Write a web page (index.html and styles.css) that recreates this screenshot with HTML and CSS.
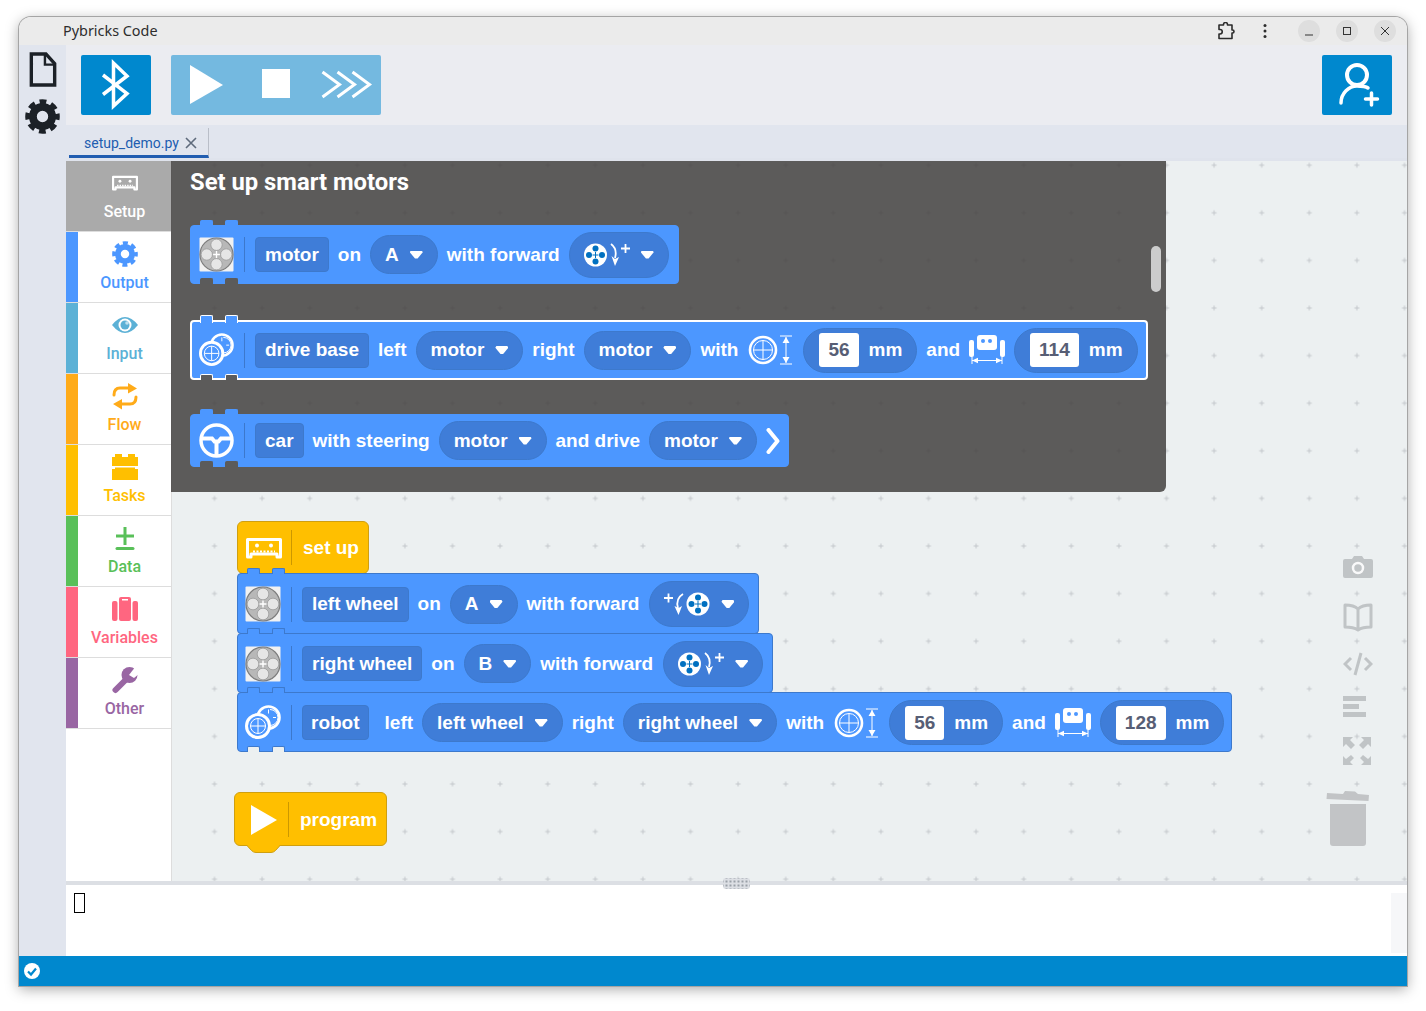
FILE: index.html
```html
<!DOCTYPE html>
<html lang="en">

<head>
    <meta charset="UTF-8">
    <title>Pybricks Code</title>
    <link rel="stylesheet" href="styles.css">
</head>

<body>
    <!-- shared block icons -->
    <svg class="defs" width="0" height="0">
        <symbol id="motor" viewBox="0 0 36 36">
            <rect x="0.5" y="0.5" width="35" height="35" rx="1" fill="#f1f1f1" />
            <circle cx="18" cy="18" r="17" fill="#b8b8b8" stroke="#7d7d7d" stroke-width="1.2" />
            <circle cx="18" cy="8" r="5.800" fill="#e6e6e6" stroke="#8c8c8c" stroke-width=".6" />
            <circle cx="18" cy="28" r="5.800" fill="#e6e6e6" stroke="#8c8c8c" stroke-width=".6" />
            <circle cx="8" cy="18" r="5.800" fill="#e6e6e6" stroke="#8c8c8c" stroke-width=".6" />
            <circle cx="28" cy="18" r="5.800" fill="#e6e6e6" stroke="#8c8c8c" stroke-width=".6" />
            <path d="M18 14.500v7M14.500 18h7" stroke="#fff" stroke-width="1.400" />
        </symbol>
        <symbol id="drive" viewBox="0 0 36 36">
            <g fill="none" stroke="#fff">
                <circle cx="23.500" cy="12.500" r="11" stroke-width="2.600" />
                <path d="M25 4.500a8 8 0 0 1 0 16M23.500 4.500v4M31 12.500h-3" stroke-width="1" />
                <circle cx="13" cy="21" r="11.500" fill="#4c97ff" stroke-width="3" />
                <circle cx="13" cy="21" r="7.500" stroke-width="1" />
                <path d="M13 13.500v15M5.500 21h15" stroke-width="1" />
            </g>
        </symbol>
        <symbol id="wheel" viewBox="0 0 30 30">
            <g fill="none" stroke="#fff">
                <circle cx="15" cy="15" r="13" stroke-width="2.600" />
                <circle cx="15" cy="15" r="9.500" stroke-width="1" />
                <path d="M15 5.500v19M5.500 15h19" stroke-width="1" />
            </g>
        </symbol>
        <symbol id="height" viewBox="0 0 12 30">
            <path d="M0 1h12M0 29h12M6 2v26" stroke="#fff" fill="none" stroke-width="1" />
            <path d="M6 2l3.500 6h-7zM6 28l3.500-6h-7z" fill="#fff" />
        </symbol>
        <symbol id="robot" viewBox="0 0 36 30">
            <rect x="0" y="5" width="5" height="17" rx="2" fill="#fff" />
            <rect x="31" y="5" width="5" height="17" rx="2" fill="#fff" />
            <rect x="8" y="0" width="20" height="15" rx="3" fill="#fff" />
            <circle cx="14" cy="6" r="2" fill="#4c97ff" />
            <circle cx="21" cy="6" r="2" fill="#4c97ff" />
            <path d="M3 22v7M33 22v7M3 25.500h30" stroke="#fff" fill="none" />
            <path d="M3 25.500l6-2.800v5.600zM33 25.500l-6-2.800v5.600z" fill="#fff" />
        </symbol>
        <symbol id="forward-cw" viewBox="0 0 46 26">
            <circle cx="11.500" cy="13" r="11.500" fill="#fff" />
            <g fill="#0070c0">
                <circle cx="11.500" cy="6.500" r="3" />
                <circle cx="11.500" cy="19.500" r="3" />
                <circle cx="5" cy="13" r="3" />
                <circle cx="18" cy="13" r="3" />
            </g>
            <path d="M11.500 10v6M8.500 13h6" stroke="#0070c0" />
            <path d="M27 2c4 3 6 7 4 14" fill="none" stroke="#fff" stroke-width="1.800" />
            <path d="M27.500 14l3.500 10 4-9-4 2z" fill="#fff" />
            <path d="M37 6.500h9M41.500 2v9" stroke="#fff" stroke-width="1.800" />
        </symbol>
        <symbol id="forward-ccw" viewBox="0 0 46 26">
            <circle cx="34" cy="13" r="11.500" fill="#fff" />
            <g fill="#0070c0">
                <circle cx="34" cy="6.500" r="3" />
                <circle cx="34" cy="19.500" r="3" />
                <circle cx="27.500" cy="13" r="3" />
                <circle cx="40.500" cy="13" r="3" />
            </g>
            <path d="M34 10v6M31 13h6" stroke="#0070c0" />
            <path d="M19 3c-5 3-7 7-5 14" fill="none" stroke="#fff" stroke-width="1.800" />
            <path d="M18 15l-3.500 9-4-9 4 2z" fill="#fff" />
            <path d="M0 7h9M4.500 2.500v9" stroke="#fff" stroke-width="1.800" />
        </symbol>
        <symbol id="setup" viewBox="0 0 36 22">
            <path d="M3 20H1.500V2.500h33V20H31v-3H5v3z" fill="none" stroke="currentColor" stroke-width="3" stroke-linejoin="round" />
            <circle cx="11" cy="8.500" r="2" fill="currentColor" />
            <circle cx="25" cy="8.500" r="2" fill="currentColor" />
            <path d="M7 14.500h22" stroke="currentColor" stroke-width="2" stroke-dasharray="2 1.500" />
        </symbol>
        <symbol id="gear" viewBox="0 0 40 40">
            <g fill="none" stroke="currentColor">
                <circle cx="20" cy="20" r="11" stroke-width="9" />
                <circle cx="20" cy="20" r="16.500" stroke-width="6.500" stroke-dasharray="7.500 5.460" stroke-dashoffset="3.750" />
            </g>
        </symbol>
    </svg>

    <div class="window">
        <header class="titlebar">
            <span class="title">Pybricks Code</span>
            <svg class="title-icon" width="18" height="18" viewBox="0 0 18 18">
                <path d="M2 3h4.500V2.500a2 2 0 0 1 4 0V3H15v5h.5a1.500 1.500 0 0 1 0 3H15v5.500H2V12h1a2 2 0 0 0 0-4.500H2z" fill="none" stroke="#2c2c2c" stroke-width="1.600" stroke-linejoin="round" />
            </svg>
            <svg class="title-dots" width="6" height="16" viewBox="0 0 6 16">
                <circle cx="3" cy="2.500" r="1.500" />
                <circle cx="3" cy="8" r="1.500" />
                <circle cx="3" cy="13.500" r="1.500" />
            </svg>
            <div class="win-controls">
                <span class="win-btn"><svg width="22" height="22" viewBox="0 0 22 22"><path d="M7 15h8" stroke="#333" /></svg></span>
                <span class="win-btn"><svg width="22" height="22" viewBox="0 0 22 22"><rect x="7.500" y="7.500" width="7" height="7" fill="none" stroke="#333" /></svg></span>
                <span class="win-btn"><svg width="22" height="22" viewBox="0 0 22 22"><path d="M7 7l8 8M15 7l-8 8" stroke="#333" /></svg></span>
            </div>
        </header>

        <div class="main">
            <nav class="activity">
                <svg class="activity-file" width="28" height="35" viewBox="0 0 28 36">
                    <path d="M2 2h15l9 10v22H2z" fill="none" stroke="#1c2127" stroke-width="3.500" />
                    <path d="M16 2v11h10" fill="none" stroke="#1c2127" stroke-width="2.500" />
                </svg>
                <svg class="activity-gear" width="35" height="35"><use href="#gear" /></svg>
            </nav>

            <div class="content">
                <div class="toolbar">
                    <button class="tool-btn">
                        <svg width="70" height="60" viewBox="0 0 70 60">
                            <path d="M22 20l24 18.500-13.500 12.500V8L46 21 22 39.500" fill="none" stroke="#fff" stroke-width="3.500" />
                        </svg>
                    </button>
                    <div class="tool-group">
                        <svg width="70" height="60" viewBox="0 0 70 60"><path d="M19 10l33 20-33 19z" fill="#fff" /></svg>
                        <svg width="70" height="60" viewBox="0 0 70 60"><rect x="21" y="14" width="28" height="29" fill="#fff" /></svg>
                        <svg width="70" height="60" viewBox="0 0 70 60">
                            <path d="M11.500 17l17 12.500-17 12.500M26.500 17l17 12.500-17 12.500M41.500 17l17 12.500-17 12.500" fill="none" stroke="#fff" stroke-width="3" />
                        </svg>
                    </div>
                    <button class="tool-btn tool-user">
                        <svg width="70" height="60" viewBox="0 0 70 60">
                            <g fill="none" stroke="#fff" stroke-linecap="round">
                                <circle cx="35" cy="20" r="10" stroke-width="4" />
                                <path d="M19 48c0-10 8-17 16-17 5 0 9 .5 11 2" stroke-width="3.500" />
                                <path d="M43.500 44h12M49.500 38v12" stroke-width="3.500" />
                            </g>
                        </svg>
                    </button>
                </div>

                <div class="tabs-bar">
                    <div class="tab">
                        <span>setup_demo.py</span>
                        <svg width="12" height="12" viewBox="0 0 12 12"><path d="M1 1l10 10M11 1L1 11" stroke="#5f6b7c" stroke-width="1.600" /></svg>
                    </div>
                </div>

                <div class="editor">
                    <aside class="toolbox">
                        <div class="cat cat-setup">
                            <svg width="26" height="16"><use href="#setup" /></svg>
                            <span>Setup</span>
                        </div>
                        <div class="cat cat-output">
                            <svg width="28" height="28"><use href="#gear" /></svg>
                            <span>Output</span>
                        </div>
                        <div class="cat cat-input">
                            <svg width="26" height="28" viewBox="0 0 26 28">
                                <path d="M0 14Q13-2 26 14 13 30 0 14z" fill="currentColor" />
                                <circle cx="13" cy="14" r="6.500" fill="#fff" />
                                <circle cx="13" cy="14" r="4.500" fill="currentColor" />
                                <circle cx="15" cy="12" r="1.800" fill="#fff" opacity=".6" />
                            </svg>
                            <span>Input</span>
                        </div>
                        <div class="cat cat-flow">
                            <svg width="26" height="28" viewBox="0 0 26 28">
                                <path d="M2 13c0-5 2-7 6-7h10M24 15c0 5-2 7-6 7H8" fill="none" stroke="currentColor" stroke-width="3" stroke-linecap="round" />
                                <path d="M16 1l9 5.500-9 5zM10 17l-9 5 9 5.500z" fill="currentColor" />
                            </svg>
                            <span>Flow</span>
                        </div>
                        <div class="cat cat-tasks">
                            <svg width="26" height="28" viewBox="0 0 26 28">
                                <path d="M0 4h3V1h7v3h6V1h7v3h3v9H0zM0 16h3v-1.500h20V16h3v11H0z" fill="currentColor" />
                            </svg>
                            <span>Tasks</span>
                        </div>
                        <div class="cat cat-data">
                            <svg width="20" height="28" viewBox="0 0 20 28">
                                <path d="M1 12h18M10 3v18" fill="none" stroke="currentColor" stroke-width="3" />
                                <path d="M2 24.500h16" stroke="currentColor" stroke-width="3" stroke-linecap="round" />
                            </svg>
                            <span>Data</span>
                        </div>
                        <div class="cat cat-variables">
                            <svg width="26" height="28" viewBox="0 0 26 28">
                                <rect x="0" y="6" width="5.500" height="20" rx="2" fill="currentColor" />
                                <rect x="7" y="2" width="12" height="24" rx="2" fill="currentColor" />
                                <rect x="20.500" y="6" width="5.500" height="20" rx="2" fill="currentColor" />
                                <rect x="10" y="4" width="6" height="1.500" fill="#fff" />
                            </svg>
                            <span>Variables</span>
                        </div>
                        <div class="cat cat-other">
                            <svg width="26" height="28" viewBox="0 0 26 28">
                                <path d="M3.500 24L14 13.500" stroke="currentColor" stroke-width="6" stroke-linecap="round" />
                                <circle cx="17.500" cy="9" r="8" fill="currentColor" />
                                <path d="M17 9l7-9h4v7l-6 5z" fill="#fff" />
                            </svg>
                            <span>Other</span>
                        </div>
                    </aside>

                    <section class="canvas">
                        <svg class="canvas-grid" width="100%" height="100%">
                            <defs>
                                <pattern id="dots" x="18.700" y="-19.600" width="47.600" height="47.600" patternUnits="userSpaceOnUse">
                                    <path d="M21.300 23.800h5M23.800 21.300v5" stroke="#c4c8cb" />
                                </pattern>
                            </defs>
                            <rect width="100%" height="100%" fill="url(#dots)" />
                        </svg>

                        <!-- flyout with the blocks of the Setup category -->
                        <div class="flyout">
                            <h2 class="flyout-title">Set up smart motors</h2>
                            <div class="flyout-list">
                                <div class="block block-flyout">
                                    <span class="tabs"><i></i><i></i></span>
                                    <svg class="b-icon" width="35" height="35"><use href="#motor" /></svg>
                                    <span class="divider"></span>
                                    <span class="chip">motor</span>
                                    <span>on</span>
                                    <span class="pill">A <i class="caret"></i></span>
                                    <span>with forward</span>
                                    <span class="pill pill-tall"><svg width="46" height="26"><use href="#forward-cw" /></svg><i class="caret"></i></span>
                                    <span class="notches"><i></i><i></i></span>
                                </div>
                                <div class="block block-flyout block-selected">
                                    <span class="tabs"><i></i><i></i></span>
                                    <svg class="b-icon" width="35" height="35"><use href="#drive" /></svg>
                                    <span class="divider"></span>
                                    <span class="chip">drive base</span>
                                    <span>left</span>
                                    <span class="pill">motor <i class="caret"></i></span>
                                    <span>right</span>
                                    <span class="pill">motor <i class="caret"></i></span>
                                    <span>with</span>
                                    <svg class="b-wheel" width="30" height="30"><use href="#wheel" /></svg>
                                    <svg class="b-height" width="12" height="30"><use href="#height" /></svg>
                                    <span class="pill pill-num"><b class="num">56</b> mm</span>
                                    <span>and</span>
                                    <svg width="36" height="30"><use href="#robot" /></svg>
                                    <span class="pill pill-num"><b class="num">114</b> mm</span>
                                    <span class="notches"><i></i><i></i></span>
                                </div>
                                <div class="block block-flyout block-short">
                                    <span class="tabs"><i></i><i></i></span>
                                    <svg class="b-icon" width="35" height="35" viewBox="0 0 35 35">
                                        <g fill="none" stroke="#fff">
                                            <circle cx="17.500" cy="17.500" r="15.500" stroke-width="3.500" />
                                            <path d="M3 15.500h10l2.500 3h4l2.500-3h10M17.500 19v14" stroke-width="4" />
                                        </g>
                                    </svg>
                                    <span class="divider"></span>
                                    <span class="chip">car</span>
                                    <span>with steering</span>
                                    <span class="pill">motor <i class="caret"></i></span>
                                    <span>and drive</span>
                                    <span class="pill">motor <i class="caret"></i></span>
                                    <svg width="14" height="26" viewBox="0 0 14 26"><path d="M2.500 2l9 11-9 11" fill="none" stroke="#fff" stroke-width="4" stroke-linecap="round" stroke-linejoin="round" /></svg>
                                    <span class="notches"><i></i><i></i></span>
                                </div>
                            </div>
                            <span class="flyout-scroll"></span>
                        </div>

                        <!-- setup stack -->
                        <div class="stack">
                            <div class="block block-hat">
                                <svg class="hat-icon" width="36" height="22"><use href="#setup" /></svg>
                                <span class="divider"></span>
                                <span>set up</span>
                                <span class="notches"><i></i><i></i></span>
                            </div>
                            <div class="block">
                                <span class="tabs"><i></i><i></i></span>
                                <svg class="b-icon" width="36" height="36"><use href="#motor" /></svg>
                                <span class="divider"></span>
                                <span class="chip">left wheel</span>
                                <span>on</span>
                                <span class="pill">A <i class="caret"></i></span>
                                <span>with forward</span>
                                <span class="pill pill-tall"><svg width="46" height="26"><use href="#forward-ccw" /></svg><i class="caret"></i></span>
                                <span class="notches"><i></i><i></i></span>
                            </div>
                            <div class="block">
                                <span class="tabs"><i></i><i></i></span>
                                <svg class="b-icon" width="36" height="36"><use href="#motor" /></svg>
                                <span class="divider"></span>
                                <span class="chip">right wheel</span>
                                <span>on</span>
                                <span class="pill">B <i class="caret"></i></span>
                                <span>with forward</span>
                                <span class="pill pill-tall"><svg width="46" height="26"><use href="#forward-cw" /></svg><i class="caret"></i></span>
                                <span class="notches"><i></i><i></i></span>
                            </div>
                            <div class="block block-robot">
                                <span class="tabs"><i></i><i></i></span>
                                <svg class="b-icon" width="36" height="36"><use href="#drive" /></svg>
                                <span class="divider"></span>
                                <span class="chip chip-robot">robot</span>
                                <span>left</span>
                                <span class="pill">left wheel <i class="caret"></i></span>
                                <span>right</span>
                                <span class="pill">right wheel <i class="caret"></i></span>
                                <span>with</span>
                                <svg class="b-wheel" width="30" height="30"><use href="#wheel" /></svg>
                                <svg class="b-height" width="12" height="30"><use href="#height" /></svg>
                                <span class="pill pill-num"><b class="num">56</b> mm</span>
                                <span>and</span>
                                <svg width="36" height="30"><use href="#robot" /></svg>
                                <span class="pill pill-num"><b class="num">128</b> mm</span>
                                <span class="notches"><i></i><i></i></span>
                            </div>
                        </div>

                        <div class="block block-hat block-program">
                            <svg width="26" height="30" viewBox="0 0 26 30"><path d="M0 0l26 15L0 30z" fill="#fff" /></svg>
                            <span class="divider"></span>
                            <span>program</span>
                            <svg class="prog-notch" width="35" height="8" viewBox="0 0 35 8"><path d="M.5 0l5 5.500Q7.500 7.500 10 7.500h15q2.500 0 4.500-2l5-5.500" fill="#ffbf00" stroke="#cf9f10" /></svg>
                        </div>

                        <!-- workspace buttons -->
                        <div class="ws-tools">
                            <svg class="ws-camera" width="30" height="22" viewBox="0 0 30 22">
                                <path d="M2 3h7l2-3h8l2 3h7a2 2 0 0 1 2 2v15a2 2 0 0 1-2 2H2a2 2 0 0 1-2-2V5a2 2 0 0 1 2-2z" fill="currentColor" />
                                <circle cx="15" cy="12" r="5" fill="none" stroke="#fff" stroke-width="2.500" opacity=".9" />
                            </svg>
                            <svg width="30" height="29" viewBox="0 0 30 29">
                                <path d="M15 6C12 3 7 2 2 2v22c5 0 10 1 13 3 3-2 8-3 13-3V2c-5 0-10 1-13 4zV27" fill="none" stroke="currentColor" stroke-width="3" stroke-linejoin="round" />
                            </svg>
                            <svg width="30" height="24" viewBox="0 0 30 24">
                                <path d="M8 6L2 12l6 6M22 6l6 6-6 6" fill="none" stroke="currentColor" stroke-width="3" />
                                <path d="M18 1l-6 22" stroke="currentColor" stroke-width="3" />
                            </svg>
                            <svg width="30" height="21" viewBox="0 0 30 21">
                                <path d="M0 0h23v5H0zM0 8h16v5H0zM0 16h23v5H0z" fill="currentColor" />
                            </svg>
                            <svg width="28" height="28" viewBox="0 0 28 28">
                                <g fill="currentColor">
                                    <path d="M0 0h10L7 3l5 5-4 4-5-5-3 3z" />
                                    <path d="M28 0H18l3 3-5 5 4 4 5-5 3 3z" />
                                    <path d="M0 28h10l-3-3 4-4-3-3-5 4-3-3z" />
                                    <path d="M28 28H18l3-3-4-4 3-3 5 4 3-3z" />
                                </g>
                            </svg>
                        </div>
                        <svg class="ws-trash" width="44" height="57" viewBox="0 0 44 57">
                            <path d="M1 3l16 1 2-3 10 .5 3 2.500 11 1-.5 6L.5 9z" fill="currentColor" />
                            <path d="M4 14h36v39a3 3 0 0 1-3 3H7a3 3 0 0 1-3-3z" fill="currentColor" />
                        </svg>
                    </section>
                </div>

                <div class="sash"><span class="sash-grip"></span></div>

                <div class="terminal">
                    <span class="cursor"></span>
                    <span class="term-scroll"></span>
                </div>
            </div>
        </div>

        <footer class="statusbar">
            <svg width="18" height="18" viewBox="0 0 18 18">
                <circle cx="9" cy="9" r="8" fill="#fff" />
                <path d="M5 9.500l3 3 5-6" fill="none" stroke="#0088ce" stroke-width="2.200" />
            </svg>
        </footer>
    </div>
</body>

</html>
```

FILE: styles.css
```css
* {
    margin: 0;
    padding: 0;
    box-sizing: border-box;
}

body {
    width: 1426px;
    height: 1011px;
    padding: 17px 19px 25px;
    overflow: hidden;
    background-color: #fff;
    font-family: "Liberation Sans", Arial, sans-serif;
}

.defs {
    position: absolute;
}

svg {
    display: block;
    flex: none;
}

/* window frame */
.window {
    display: flex;
    width: 1388px;
    height: 969px;
    flex-direction: column;
    overflow: hidden;
    border-radius: 12px 12px 0 0;
    box-shadow: 0 0 0 1px #a5a5a5, 0 3px 14px rgba(0, 0, 0, .35);
}

.titlebar {
    display: flex;
    height: 28px;
    flex: none;
    align-items: center;
    background-color: #ebebeb;
}

.title {
    margin-left: 44px;
    padding-bottom: 2px;
    color: #2d2d2d;
    font-family: "Noto Sans", sans-serif;
    font-size: 14.4px;
}

.title-icon {
    margin-left: auto;
}

.title-dots {
    margin-left: 27px;
    fill: #2d2d2d;
}

.win-controls {
    display: flex;
    margin: 0 11px 0 30px;
    gap: 16px;
}

.win-btn {
    width: 22px;
    height: 22px;
    border-radius: 50%;
    background-color: #dedede;
}

.main {
    display: flex;
    flex: 1;
    min-height: 0;
}

.activity {
    display: flex;
    width: 47px;
    flex: none;
    align-items: center;
    flex-direction: column;
    padding-top: 7px;
    background-color: #e1e5ee;
}

.activity-gear {
    margin-top: 12px;
    color: #1c2127;
}

.content {
    display: flex;
    min-width: 0;
    flex: 1;
    flex-direction: column;
}

/* toolbar */
.toolbar {
    display: flex;
    height: 80px;
    flex: none;
    gap: 20px;
    padding: 10px 15px;
    background-color: #ebecf1;
}

.tool-btn {
    width: 70px;
    height: 60px;
    border: none;
    border-radius: 2px;
    background-color: #0088ce;
}

.tool-group {
    display: flex;
    height: 60px;
    border-radius: 2px;
    background-color: #74b9e0;
}

.tool-user {
    margin-left: auto;
}

.tabs-bar {
    display: flex;
    height: 36px;
    flex: none;
    padding: 3px 0 0 3px;
    background-color: #e1e5ee;
    border-bottom: 3px solid #dfe3ec;
}

.tab {
    display: flex;
    width: 140px;
    height: 30px;
    gap: 6px;
    align-items: center;
    padding: 2px 0 0 15px;
    color: #215db0;
    font-family: Roboto, sans-serif;
    font-size: 14px;
    border-right: 1px solid #b9bec8;
    border-bottom: 3px solid #215db0;
}

/* editor */
.editor {
    display: flex;
    height: 720px;
    flex: none;
}

.toolbox {
    display: flex;
    width: 106px;
    flex: none;
    flex-direction: column;
    background-color: #fff;
    border-right: 1px solid #ddd;
    font-family: Roboto, sans-serif;
    font-size: 16px;
    font-weight: 500;
}

.cat {
    display: flex;
    height: 71px;
    flex: none;
    gap: 5px;
    align-items: center;
    flex-direction: column;
    justify-content: center;
    padding: 0 0 2px 12px;
    color: var(--cat);
    border-bottom: 1px solid #ddd;
    box-shadow: inset 12px 0 0 var(--cat);
}

.cat svg {
    height: 28px;
}

.cat-setup {
    color: #fff;
    background-color: #aaa;
}

.cat-output svg {
    width: 26px;
    height: 26px;
    margin: 1px 0;
}

.cat-output { --cat: #4c97ff; }
.cat-input { --cat: #5cb1d6; }
.cat-flow { --cat: #ffab19; }
.cat-tasks { --cat: #ffbf00; }
.cat-data { --cat: #59c059; }
.cat-variables { --cat: #ff6680; }
.cat-other { --cat: #9966a3; }

.canvas {
    position: relative;
    flex: 1;
    background-color: #ecf0f1;
    --notch: #ecf0f1;
}

.canvas-grid {
    position: absolute;
    left: 0;
    top: 0;
}

/* flyout */
.flyout {
    position: absolute;
    left: -1px;
    top: 0;
    width: 995px;
    height: 331px;
    padding: 7px 0 0 19px;
    color: #fff;
    background-color: rgba(67, 65, 64, .85);
    border-radius: 0 0 6px 0;
    --notch: #5b5b5b;
}

.flyout-title {
    font-family: Roboto, sans-serif;
    font-size: 23.8px;
    font-weight: 700;
    line-height: 28px;
}

.flyout-list {
    display: flex;
    margin-top: 29px;
    gap: 36px;
    align-items: flex-start;
    flex-direction: column;
}

.flyout-scroll {
    position: absolute;
    right: 5px;
    top: 85px;
    width: 10px;
    height: 46px;
    border-radius: 5px;
    background-color: #ccc;
}

/* blocks */
.block {
    position: relative;
    display: inline-flex;
    height: 60px;
    gap: 9px;
    align-items: center;
    padding: 0 9px 0 8px;
    color: #fff;
    font-size: 19px;
    font-weight: bold;
    white-space: nowrap;
    border: 1px solid #3d79cc;
    border-radius: 4px;
    background-color: #4c97ff;
}

.block-flyout {
    height: 59px;
    border-color: #4c97ff;
}

.block-short {
    height: 53px;
    margin-top: -2px;
    padding-right: 8px;
}

.block-selected {
    height: 60px;
    border: 2px solid #fff;
    padding-left: 7px;
    padding-right: 8px;
}

.tabs,
.notches {
    position: absolute;
    left: 9px;
    display: flex;
    gap: 12px;
}

.tabs {
    top: -6px;
}

.notches {
    bottom: -1px;
}

.tabs i,
.notches i {
    width: 13px;
    height: 6px;
    border: 1px solid #3d79cc;
    border-bottom: none;
    border-radius: 2px 2px 0 0;
}

.tabs i {
    background-color: #4c97ff;
}

.notches i {
    background-color: var(--notch);
}

.block-flyout .tabs i {
    border-color: #4c97ff;
}

.block-flyout .notches i {
    border-color: var(--notch);
}

.block-selected .tabs,
.block-selected .notches {
    left: 8px;
}

.block-selected .tabs {
    top: -7px;
}

.block-selected .notches {
    bottom: -2px;
}

.block-selected .tabs i,
.block-selected .notches i {
    border-color: #fff;
}

.block-selected .tabs i {
    height: 8px;
}

.b-icon {
    margin-right: 1px;
}

.divider {
    width: 1px;
    height: 35px;
    flex: none;
    background-color: rgba(0, 0, 0, .2);
}

.chip {
    display: flex;
    height: 35px;
    align-items: center;
    margin-left: 1px;
    padding: 0 9px;
    border: 1px solid #3d79cc;
    border-radius: 4px;
    background-color: #3f7dd8;
}

.chip-robot {
    margin-right: 7px;
    padding: 0 8px;
}

.pill {
    display: flex;
    height: 39px;
    gap: 11px;
    align-items: center;
    padding: 0 14px;
    border: 1px solid #3d79cc;
    border-radius: 20px;
    background-color: #3f7dd8;
}

.pill-tall {
    height: 46px;
    border-radius: 23px;
}

.pill-num {
    height: 45px;
    gap: 10px;
    padding: 0 14px 0 15px;
    border-radius: 23px;
}

.caret {
    width: 13px;
    height: 8px;
    background-color: #fff;
    clip-path: polygon(8% 0, 92% 0, 100% 22%, 60% 100%, 40% 100%, 0 22%);
}

.num {
    display: flex;
    height: 34px;
    align-items: center;
    padding: 0 9px;
    color: #575e75;
    border-radius: 3px;
    background-color: #fff;
}

.b-height {
    margin-left: -7px;
    margin-right: 2px;
}

.b-wheel {
    margin-left: 1px;
}

/* stack on the workspace */
.stack {
    position: absolute;
    left: 65px;
    top: 360px;
    display: flex;
    align-items: flex-start;
    flex-direction: column;
}

.stack .block + .block {
    margin-top: -1px;
    padding-top: 1px;
    padding-left: 7px;
}

.stack .block-hat + .block {
    height: 61px;
}

.stack .block-robot {
    padding-right: 7px;
}

.stack .pill-tall {
    margin-left: 1px;
}

.block-hat {
    height: 53px;
    gap: 11px;
    padding-right: 9px;
    border-color: #cf9f10;
    border-radius: 6px;
    background-color: #ffbf00;
}

.block-hat .notches i {
    border-color: #cf9f10;
    background-color: #ecf0f1;
}

.hat-icon {
    margin-right: -2px;
    color: #fff;
}

.block-program {
    position: absolute;
    left: 62px;
    top: 631px;
    height: 54px;
    padding: 1px 9px 0 16px;
}

.prog-notch {
    position: absolute;
    left: 11px;
    bottom: -8px;
}

/* workspace buttons */
.ws-tools {
    position: absolute;
    right: 34px;
    top: 395px;
    display: flex;
    gap: 20px;
    flex-direction: column;
    color: #c0c4c6;
}

.ws-camera {
    margin-bottom: 5px;
}

.ws-trash {
    position: absolute;
    left: 1154px;
    top: 629px;
    color: #c2c4c6;
}

/* bottom */
.sash {
    position: relative;
    z-index: 1;
    height: 4px;
    flex: none;
    background-color: #dcdfe4;
}

.sash-grip {
    position: absolute;
    left: 657px;
    top: -3px;
    width: 27px;
    height: 11px;
    border-radius: 3px;
    background-color: #dcdfe4;
    background-image: radial-gradient(#9aa0a8 .8px, transparent 1px);
    background-size: 4px 4px;
    background-position: 1.500px 1.500px;
}

.terminal {
    position: relative;
    height: 71px;
    flex: none;
    padding: 8px;
    background-color: #fff;
}

.cursor {
    display: block;
    width: 11px;
    height: 20px;
    border: 1.500px solid #000;
}

.term-scroll {
    position: absolute;
    right: 0;
    top: 8px;
    width: 16px;
    height: 60px;
    background-color: #f6f7f9;
}

.statusbar {
    display: flex;
    height: 30px;
    flex: none;
    align-items: center;
    padding-left: 4px;
    background-color: #0088ce;
}
```
